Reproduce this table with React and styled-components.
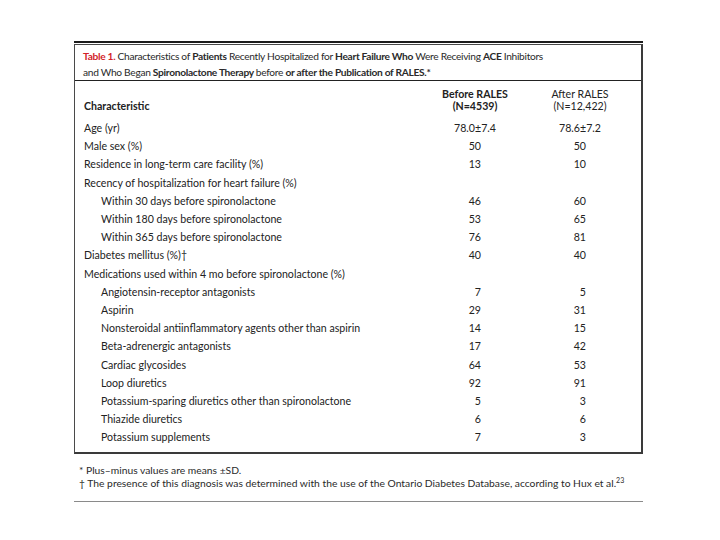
import React from "react";
import styled, { createGlobalStyle } from "styled-components";

const GlobalStyle = createGlobalStyle`
  html, body {
    margin: 0;
    background: #ffffff;
  }
  body {
    font-family: Lato, "Liberation Sans", sans-serif;
    color: #222;
  }
`;

const Page = styled.div`
  width: 720px;
  height: 540px;
  padding: 41px 0 0 74px;
  box-sizing: border-box;
`;

const Figure = styled.div`
  width: 569px;
  border-top: 2px solid #1c1c1c;
`;

const Box = styled.div`
  margin-top: 1px;
  border: 1px solid #4a4a4a;
  border-right: 2px solid #3a3a3a;
  border-bottom: 2px solid #3a3a3a;
`;

const Caption = styled.div`
  padding: 3px 8px 0 8px;
  font-size: 10.2px;
  letter-spacing: -0.3px;
  line-height: 16px;
  font-weight: 700;
  color: #2a2a2a;
  height: 32px;
  border-bottom: 1px solid #222;
  white-space: nowrap;
`;

const Label = styled.span`
  color: #d2232a;
`;

const Light = styled.span`
  font-weight: 400;
`;

const Row = styled.div`
  display: grid;
  grid-template-columns: 326px 80px 80px;
  column-gap: 25px;
  padding-left: 9px;
  font-size: 10.6px;
  line-height: ${(p) => (p.$head ? "12px" : "18.2px")};
  ${(p) => p.$head && "padding-top: 7px; padding-bottom: 7px; align-items: end;"}
`;

const Body = styled.div`
  padding-bottom: 5px;
`;

const Name = styled.div`
  padding-left: ${(p) => (p.$indent ? "17px" : "0")};
  font-weight: ${(p) => (p.$bold ? 700 : 400)};
  white-space: nowrap;
`;

const Cell = styled.div`
  text-align: ${(p) => (p.$center ? "center" : "right")};
  padding-right: ${(p) => (p.$center ? "0" : "34px")};
  font-weight: ${(p) => (p.$bold ? 700 : 400)};
  white-space: nowrap;
`;

const Notes = styled.div`
  padding: 10px 0 0 5px;
  font-size: 10.3px;
  line-height: 13px;
  color: #2a2a2a;
  white-space: nowrap;
`;

const Sup = styled.sup`
  font-size: 7px;
  line-height: 0;
`;

const BottomRule = styled.div`
  margin-top: 11px;
  height: 1px;
  background: #8a8a8a;
`;

const rows = [
  ["Age (yr)", "78.0±7.4", "78.6±7.2", false, true],
  ["Male sex (%)", "50", "50"],
  ["Residence in long-term care facility (%)", "13", "10"],
  ["Recency of hospitalization for heart failure (%)", "", ""],
  ["Within 30 days before spironolactone", "46", "60", true],
  ["Within 180 days before spironolactone", "53", "65", true],
  ["Within 365 days before spironolactone", "76", "81", true],
  ["Diabetes mellitus (%)†", "40", "40"],
  ["Medications used within 4 mo before spironolactone (%)", "", ""],
  ["Angiotensin-receptor antagonists", "7", "5", true],
  ["Aspirin", "29", "31", true],
  ["Nonsteroidal antiinflammatory agents other than aspirin", "14", "15", true],
  ["Beta-adrenergic antagonists", "17", "42", true],
  ["Cardiac glycosides", "64", "53", true],
  ["Loop diuretics", "92", "91", true],
  ["Potassium-sparing diuretics other than spironolactone", "5", "3", true],
  ["Thiazide diuretics", "6", "6", true],
  ["Potassium supplements", "7", "3", true],
];

export default function App() {
  return (
    <>
      <GlobalStyle />
      <Page>
        <Figure>
          <Box>
            <Caption>
              <Label>Table 1. </Label>
              <Light>Characteristics of </Light>Patients <Light>Recently Hospitalized for </Light>
              Heart Failure Who <Light>Were Receiving </Light>ACE <Light>Inhibitors</Light>
              <br />
              <Light>and Who Began </Light>Spironolactone Therapy <Light>before </Light>or after the
              Publication of RALES.*
            </Caption>
            <Row $head>
              <Name $bold>Characteristic</Name>
              <Cell $center $bold>
                Before RALES
                <br />
                (N=4539)
              </Cell>
              <Cell $center>
                After RALES
                <br />
                (N=12,422)
              </Cell>
            </Row>
            <Body>
              {rows.map(([name, a, b, indent, center]) => (
                <Row key={name}>
                  <Name $indent={indent}>{name}</Name>
                  <Cell $center={center}>{a}</Cell>
                  <Cell $center={center}>{b}</Cell>
                </Row>
              ))}
            </Body>
          </Box>
          <Notes>
            * Plus–minus values are means ±SD.
            <br />† The presence of this diagnosis was determined with the use of the Ontario
            Diabetes Database, according to Hux et al.<Sup>23</Sup>
          </Notes>
          <BottomRule />
        </Figure>
      </Page>
    </>
  );
}
